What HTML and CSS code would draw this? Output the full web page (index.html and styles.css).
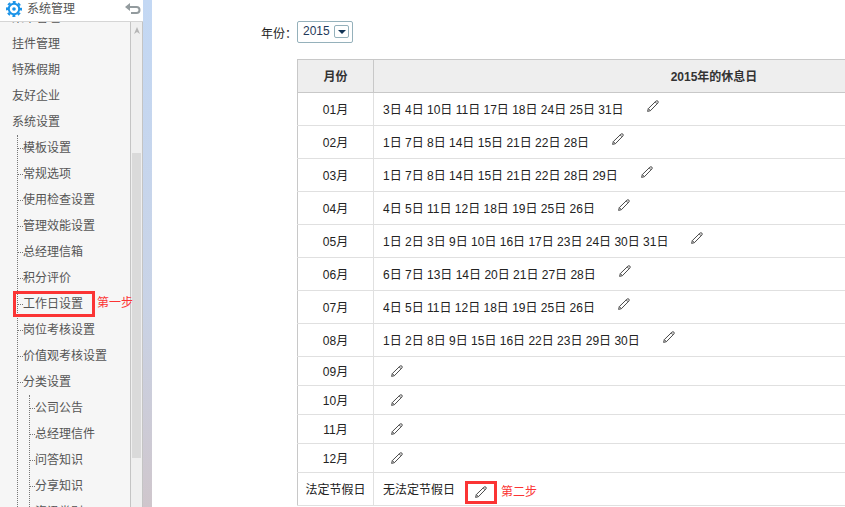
FILE: index.html
```html
<!DOCTYPE html>
<html lang="zh-CN">
<head>
    <meta charset="UTF-8">
    <meta name="viewport" content="width=device-width, initial-scale=1.0">
    <title>工作日设置</title>
    <link rel="stylesheet" href="styles.css">
</head>
<body>
    <svg class="sprite" width="0" height="0" aria-hidden="true">
        <symbol id="pencil" viewBox="0 0 12 12">
            <path d="M0.6 11.4 L1.3 8.6 L8.9 1.2 Q10 0.3 10.9 1.1 Q11.7 2 10.8 3.1 L3.4 10.7 Z M1.3 8.6 L3.4 10.7 M8.2 1.9 L10.1 3.8" fill="none" stroke="#4a4a4a" stroke-width="1"/>
        </symbol>
    </svg>
    <div class="page">
        <aside class="sidebar">
            <div class="sidebar-header">
                <svg class="gear" viewBox="0 0 16 16" width="16" height="16" aria-hidden="true">
                    <circle cx="8" cy="8" r="5.2" fill="none" stroke="#1a93e8" stroke-width="2"/>
                    <circle cx="8" cy="8" r="7" fill="none" stroke="#1a93e8" stroke-width="2" stroke-dasharray="3 2.5" stroke-dashoffset="1.5"/>
                    <circle cx="8" cy="8" r="1.8" fill="#1a93e8"/>
                </svg>
                <h1>系统管理</h1>
                <button type="button" class="back-button" aria-label="返回">
                    <svg viewBox="0 0 16 12" width="16" height="12">
                        <path d="M5 0 L0 4 L5 8 Z" fill="#939b9e"/>
                        <path d="M4 4 H11.5 Q14.5 4 14.5 7 Q14.5 10 11.5 10 H6" fill="none" stroke="#939b9e" stroke-width="2"/>
                    </svg>
                </button>
            </div>
            <div class="sidebar-body">
                <nav class="menu">
                    <ul class="level1">
                        <li><a href="#">菜单管理</a></li>
                        <li><a href="#">挂件管理</a></li>
                        <li><a href="#">特殊假期</a></li>
                        <li><a href="#">友好企业</a></li>
                        <li><a href="#">系统设置</a>
                            <ul class="tree">
                                <li><a href="#">模板设置</a></li>
                                <li><a href="#">常规选项</a></li>
                                <li><a href="#">使用检查设置</a></li>
                                <li><a href="#">管理效能设置</a></li>
                                <li><a href="#">总经理信箱</a></li>
                                <li><a href="#">积分评价</a></li>
                                <li class="current"><a href="#">工作日设置</a><span class="step step-one">第一步</span></li>
                                <li><a href="#">岗位考核设置</a></li>
                                <li><a href="#">价值观考核设置</a></li>
                                <li><a href="#">分类设置</a>
                                    <ul class="tree">
                                        <li><a href="#">公司公告</a></li>
                                        <li><a href="#">总经理信件</a></li>
                                        <li><a href="#">问答知识</a></li>
                                        <li><a href="#">分享知识</a></li>
                                        <li><a href="#">资讯类别</a></li>
                                    </ul>
                                </li>
                            </ul>
                        </li>
                    </ul>
                </nav>
                <div class="scrollbar">
                    <svg viewBox="0 0 6 7" width="6" height="7"><path d="M3 0 L6 7 L3 5 L0 7 Z" fill="#b5b5b5"/></svg>
                    <div class="thumb"></div>
                </div>
            </div>
        </aside>
        <div class="divider"></div>
        <main class="content">
            <div class="filter">
                <label for="year">年份：</label>
                <div class="select-box">
                    <select id="year" name="year">
                        <option>2014</option>
                        <option selected>2015</option>
                        <option>2016</option>
                    </select>
                    <span class="select-arrow"></span>
                </div>
            </div>
            <table class="holidays">
                <thead>
                    <tr><th class="month" scope="col">月份</th><th scope="col">2015年的休息日</th></tr>
                </thead>
                <tbody>
                    <tr>
                        <td>01月</td>
                        <td><div class="days">3日 4日 10日 11日 17日 18日 24日 25日 31日<button type="button" class="edit" aria-label="编辑01月"><svg><use href="#pencil"/></svg></button></div></td>
                    </tr>
                    <tr>
                        <td>02月</td>
                        <td><div class="days">1日 7日 8日 14日 15日 21日 22日 28日<button type="button" class="edit" aria-label="编辑02月"><svg><use href="#pencil"/></svg></button></div></td>
                    </tr>
                    <tr>
                        <td>03月</td>
                        <td><div class="days">1日 7日 8日 14日 15日 21日 22日 28日 29日<button type="button" class="edit" aria-label="编辑03月"><svg><use href="#pencil"/></svg></button></div></td>
                    </tr>
                    <tr>
                        <td>04月</td>
                        <td><div class="days">4日 5日 11日 12日 18日 19日 25日 26日<button type="button" class="edit" aria-label="编辑04月"><svg><use href="#pencil"/></svg></button></div></td>
                    </tr>
                    <tr>
                        <td>05月</td>
                        <td><div class="days">1日 2日 3日 9日 10日 16日 17日 23日 24日 30日 31日<button type="button" class="edit" aria-label="编辑05月"><svg><use href="#pencil"/></svg></button></div></td>
                    </tr>
                    <tr>
                        <td>06月</td>
                        <td><div class="days">6日 7日 13日 14日 20日 21日 27日 28日<button type="button" class="edit" aria-label="编辑06月"><svg><use href="#pencil"/></svg></button></div></td>
                    </tr>
                    <tr>
                        <td>07月</td>
                        <td><div class="days">4日 5日 11日 12日 18日 19日 25日 26日<button type="button" class="edit" aria-label="编辑07月"><svg><use href="#pencil"/></svg></button></div></td>
                    </tr>
                    <tr>
                        <td>08月</td>
                        <td><div class="days">1日 2日 8日 9日 15日 16日 22日 23日 29日 30日<button type="button" class="edit" aria-label="编辑08月"><svg><use href="#pencil"/></svg></button></div></td>
                    </tr>
                    <tr class="empty">
                        <td>09月</td>
                        <td><div class="days"><button type="button" class="edit" aria-label="编辑09月"><svg><use href="#pencil"/></svg></button></div></td>
                    </tr>
                    <tr class="empty">
                        <td>10月</td>
                        <td><div class="days"><button type="button" class="edit" aria-label="编辑10月"><svg><use href="#pencil"/></svg></button></div></td>
                    </tr>
                    <tr class="empty">
                        <td>11月</td>
                        <td><div class="days"><button type="button" class="edit" aria-label="编辑11月"><svg><use href="#pencil"/></svg></button></div></td>
                    </tr>
                    <tr class="empty">
                        <td>12月</td>
                        <td><div class="days"><button type="button" class="edit" aria-label="编辑12月"><svg><use href="#pencil"/></svg></button></div></td>
                    </tr>
                    <tr>
                        <td>法定节假日</td>
                        <td><div class="days">无法定节假日<button type="button" class="edit marked" aria-label="编辑法定节假日"><svg><use href="#pencil"/></svg></button><span class="step">第二步</span></div></td>
                    </tr>
                </tbody>
            </table>
        </main>
    </div>
</body>
</html>
```

FILE: styles.css
```css
*,
*::before,
*::after {
    box-sizing: border-box;
}
body {
    margin: 0;
    font-family: "Liberation Sans", "Noto Sans CJK SC", sans-serif;
    font-size: 12px;
    line-height: 18px;
    color: #222;
    background: #fff;
    overflow: hidden;
}
ul {
    list-style: none;
    margin: 0;
    padding: 0;
}
button {
    padding: 0;
    border: none;
    background: none;
    cursor: pointer;
}
.sprite {
    position: absolute;
}
.page {
    display: flex;
    height: 100vh;
}

/* sidebar */
.sidebar {
    display: flex;
    flex-direction: column;
    flex: none;
    width: 143px;
    background: #f6f6f6;
}
.sidebar-header {
    display: flex;
    align-items: center;
    flex: none;
    height: 22px;
    padding: 0 2px 4px 6px;
    background: #fff;
    border-bottom: 1px solid #d5d5d5;
}
.sidebar-header h1 {
    flex: 1;
    margin: 0 0 0 5px;
    font-size: 12px;
    font-weight: normal;
    color: #555;
}
.back-button {
    display: flex;
}
.sidebar-body {
    display: flex;
    flex: 1;
    min-height: 0;
    overflow: hidden;
}
.menu {
    flex: 1;
}
.level1 {
    margin-top: -17px; /* list is scrolled down */
}
.menu a {
    color: #555;
    text-decoration: none;
    line-height: 26px;
    white-space: nowrap;
}
.level1 > li > a {
    display: block;
    padding-left: 12px;
}
.tree {
    margin-left: 17px;
    border-left: 1px dotted #777;
}
.tree .tree {
    margin-left: 11px;
}
.tree a {
    display: flex;
    align-items: center;
}
.tree a::before {
    content: "";
    width: 5px;
    border-top: 1px dotted #777;
}
.current {
    position: relative;
}
.current::after {
    content: "";
    position: absolute;
    top: 0;
    left: -5px;
    width: 82px;
    height: 26px;
    border: 3px solid #fb3434;
}
.step {
    color: #fb3434;
    white-space: nowrap;
}
.step-one {
    position: absolute;
    top: 3px;
    left: 79px;
    z-index: 1;
}
.scrollbar {
    display: flex;
    flex-direction: column;
    align-items: center;
    width: 13px;
    padding-top: 5px;
    background: #efefef;
    border-left: 1px solid #c4c4c4;
    border-right: 1px solid #c4c4c4;
}
.thumb {
    width: 9px;
    height: 305px;
    margin-top: 119px;
    background: #dadada;
}
.divider {
    flex: none;
    width: 9px;
    background: linear-gradient(#c3d8f4, #c9d3e6 60%, #cfc6cc);
}

/* content */
.content {
    flex: 1;
    min-width: 0;
    overflow: hidden;
    padding: 21px 0 0 109px;
}
.filter {
    display: flex;
    margin-bottom: 16px;
}
.filter label {
    padding-top: 4px;
}
.select-box {
    position: relative;
}
.select-box select {
    appearance: none;
    display: block;
    width: 56px;
    height: 22px;
    padding: 0 20px 2px 5px;
    border: 1px solid #95b1bb;
    border-radius: 2px;
    background: #fff;
    color: #1f3a5a;
    font-family: inherit;
    font-size: 12px;
}
.select-arrow {
    position: absolute;
    top: 4px;
    right: 4px;
    display: flex;
    align-items: center;
    justify-content: center;
    width: 15px;
    height: 13px;
    border: 1px solid #95b1bb;
    border-radius: 2px;
    pointer-events: none;
}
.select-arrow::before {
    content: "";
    border: 4px solid transparent;
    border-top-color: #123456;
    border-bottom: none;
}
.holidays {
    table-layout: fixed;
    width: 100%;
    min-width: 758px; /* wide table, cut off by narrow windows */
    margin-left: 36px;
    border-collapse: collapse;
    border: 1px solid #c8c8c8;
}
.holidays th,
.holidays td {
    height: 33px;
    padding: 2px 0 0;
    border: 1px solid #e0e0e0;
    text-align: center;
}
.holidays th {
    background: #eee;
    border-color: #c8c8c8;
    color: #333;
}
.holidays .month {
    width: 76px;
}
.holidays td:first-child {
    border-left-color: #c8c8c8;
}
.days {
    display: flex;
    align-items: center;
    height: 18px;
    padding-left: 9px;
    white-space: nowrap;
}
.edit {
    display: flex;
    flex: none;
    margin: 0 0 9px 23px;
}
.edit svg {
    width: 12px;
    height: 12px;
}
.holidays .empty td {
    height: 29px;
}
.empty .edit {
    margin: 0 0 2px 8px;
}
.edit.marked {
    align-items: center;
    justify-content: center;
    width: 32px;
    height: 23px;
    margin: 4px 4px 0 10px;
    border: 3px solid #fb3434;
}
.days .step {
    padding-top: 4px;
}
```
